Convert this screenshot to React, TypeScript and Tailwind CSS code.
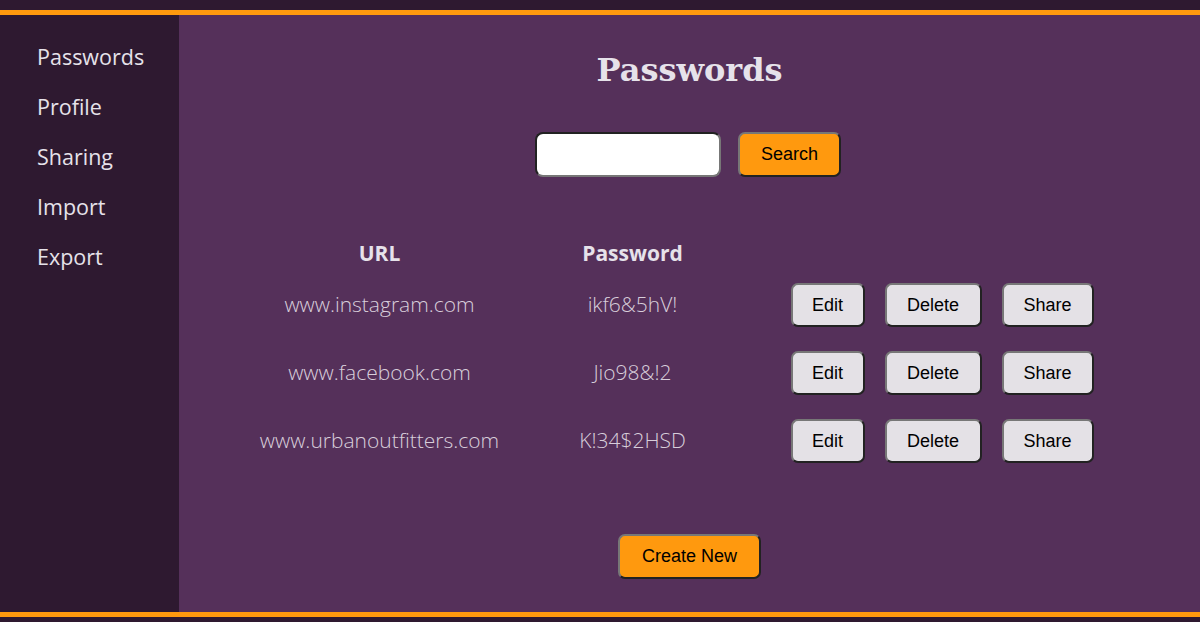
const navItems = ['Passwords', 'Profile', 'Sharing', 'Import', 'Export'];

const entries = [
  { url: 'www.instagram.com', password: 'ikf6&5hV!' },
  { url: 'www.facebook.com', password: 'Jio98&!2' },
  { url: 'www.urbanoutfitters.com', password: 'K!34$2HSD' },
];

const grayBtn =
  'h-[44px] rounded-[7px] border-2 border-t-[#777] border-l-[#777] border-r-[#222] border-b-[#222] bg-[#e4e1e6] text-[18px] text-black';
const orangeBtn =
  'h-[45px] rounded-[7px] border-2 border-t-[#777] border-l-[#777] border-r-[#222] border-b-[#222] bg-[#ff990e] text-[18px] text-black';

export default function App() {
  return (
    <div className="h-[622px] w-[1200px] flex flex-col bg-[#2e1930] font-['Liberation_Sans',Arial,sans-serif]">
      <div className="h-[10px] bg-[#2e1930]" />
      <div className="h-[5px] bg-[#ff990e]" />
      <div className="flex flex-1 min-h-0">
        <nav className="w-[179px] bg-[#2e1930] pt-[17px] pl-[37px]">
          {navItems.map((item) => (
            <div
              key={item}
              className="h-[50px] flex items-center text-[21.5px] text-[#e6e2ea] font-['Open_Sans',sans-serif]"
            >
              {item}
            </div>
          ))}
        </nav>
        <main className="flex-1 bg-[#55305a] flex flex-col items-center pt-[35px]">
          <h1 className="h-[40px] leading-[40px] text-[32px] font-bold text-[#e6e2ea] font-['DejaVu_Serif',serif]">
            Passwords
          </h1>
          <div className="mt-[42px] flex gap-[17px] -ml-[3px]">
            <input
              type="text"
              className="w-[186px] h-[45px] rounded-[8px] border-2 border-t-[#222] border-l-[#222] border-r-[#777] border-b-[#777] bg-white"
            />
            <button className={`${orangeBtn} w-[103px]`}>Search</button>
          </div>
          <div className="mt-[60px] w-[870px]">
            <div className="flex h-[34px] items-center text-[21px] font-bold text-[#e6e2ea] font-['Open_Sans',sans-serif]">
              <div className="w-[250px] text-center">URL</div>
              <div className="w-[256px] text-center">Password</div>
            </div>
            {entries.map((e) => (
              <div key={e.url} className="flex h-[68px] items-center">
                <div className="w-[250px] text-center text-[21px] font-light text-[#d8cedb] font-['Open_Sans',sans-serif]">
                  {e.url}
                </div>
                <div className="w-[256px] text-center text-[21px] font-light text-[#d8cedb] font-['Open_Sans',sans-serif]">
                  {e.password}
                </div>
                <div className="w-[364px] pl-[30px] flex gap-[20px]">
                  <button className={`${grayBtn} w-[74px]`}>Edit</button>
                  <button className={`${grayBtn} w-[97px]`}>Delete</button>
                  <button className={`${grayBtn} w-[92px]`}>Share</button>
                </div>
              </div>
            ))}
          </div>
          <button className={`${orangeBtn} mt-[59px] w-[143px] h-[44px]`}>Create New</button>
        </main>
      </div>
      <div className="h-[5px] bg-[#ff990e]" />
      <div className="h-[5px] bg-[#2e1930]" />
    </div>
  );
}
